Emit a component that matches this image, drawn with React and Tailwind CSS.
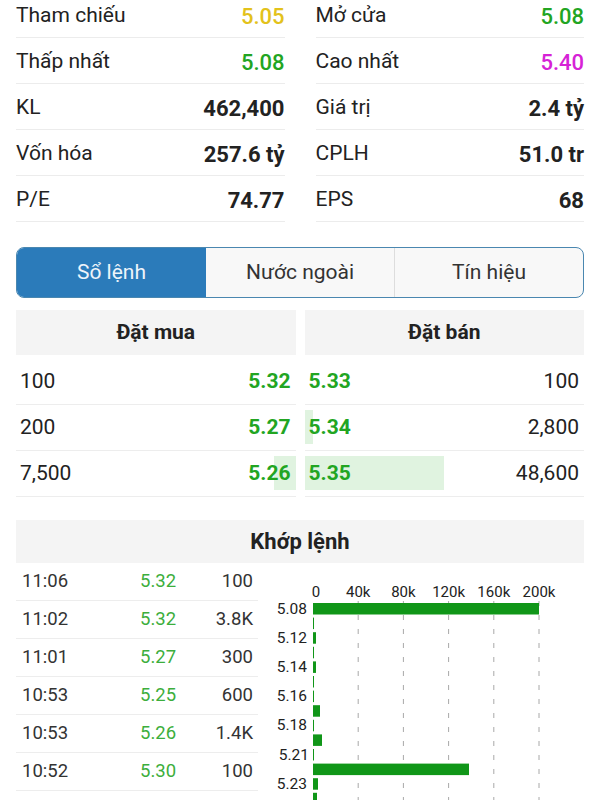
import React from "react";

const stats = [
  [
    { label: "Tham chiếu", value: "5.05", color: "text-[#e3c21b]", bold: false },
    { label: "Thấp nhất", value: "5.08", color: "text-[#22a522]", bold: false },
    { label: "KL", value: "462,400", color: "text-[#222]", bold: true },
    { label: "Vốn hóa", value: "257.6 tỷ", color: "text-[#222]", bold: true },
    { label: "P/E", value: "74.77", color: "text-[#222]", bold: true },
  ],
  [
    { label: "Mở cửa", value: "5.08", color: "text-[#22a522]", bold: false },
    { label: "Cao nhất", value: "5.40", color: "text-[#d622d6]", bold: false },
    { label: "Giá trị", value: "2.4 tỷ", color: "text-[#222]", bold: true },
    { label: "CPLH", value: "51.0 tr", color: "text-[#222]", bold: true },
    { label: "EPS", value: "68", color: "text-[#222]", bold: true },
  ],
];

const bids = [
  { qty: "100", price: "5.32", bar: 0 },
  { qty: "200", price: "5.27", bar: 0 },
  { qty: "7,500", price: "5.26", bar: 22 },
];

const asks = [
  { qty: "100", price: "5.33", bar: 0 },
  { qty: "2,800", price: "5.34", bar: 8 },
  { qty: "48,600", price: "5.35", bar: 139 },
];

const trades = [
  ["11:06", "5.32", "100"],
  ["11:02", "5.32", "3.8K"],
  ["11:01", "5.27", "300"],
  ["10:53", "5.25", "600"],
  ["10:53", "5.26", "1.4K"],
  ["10:52", "5.30", "100"],
];

// bar widths in px, 200k = 226px
const volBars = [226, 1, 3, 1, 3, 1, 1, 7, 1, 9, 1, 156, 5, 4];
const volLabels = ["5.08", "5.12", "5.14", "5.16", "5.18", "5.21", "5.23"];
const ticks = ["0", "40k", "80k", "120k", "160k", "200k"];

const VolumeChart = () => {
  const x0 = 43;
  const step = 45.2;
  return (
    <svg width="315" height="237" className="block">
      {ticks.slice(1).map((t, i) => (
        <line
          key={t}
          x1={x0 + step * (i + 1)}
          x2={x0 + step * (i + 1)}
          y1="38"
          y2="237"
          stroke="#a8a8a8"
          strokeWidth="1"
          strokeDasharray="5 9"
        />
      ))}
      {ticks.map((t, i) => (
        <text
          key={t}
          x={i === 0 ? x0 + 3 : x0 + step * i}
          y="34"
          textAnchor="middle"
          fontSize="15"
          fill="#222"
          fontFamily="Roboto, sans-serif"
        >
          {t}
        </text>
      ))}
      {volBars.map((w, i) => (
        <rect key={i} x={x0} y={40 + i * 14.6} width={w} height="11.5" fill="#109618" />
      ))}
      {volLabels.map((l, i) => (
        <text
          key={l}
          x={i === 5 ? 39 : 37}
          y={50.5 + i * 29.2}
          textAnchor="end"
          fontSize="15.5"
          fill="#222"
          fontFamily="Roboto, sans-serif"
        >
          {l}
        </text>
      ))}
    </svg>
  );
};

export default function App() {
  return (
    <div className="w-[600px] h-[800px] overflow-hidden bg-white font-['Roboto',sans-serif] text-[#222]">
      <div className="px-4 -mt-2 grid grid-cols-2 gap-x-[31px]">
        {stats.map((col, ci) => (
          <div key={ci}>
            {col.map((s) => (
              <div
                key={s.label}
                className="h-[46px] flex items-center justify-between pt-[3px] border-b border-[#ececec]"
              >
                <span className="text-[21px]">{s.label}</span>
                <span className={`text-[22px] ${s.bold ? "font-bold" : "font-medium"} ${s.color}`}>
                  {s.value}
                </span>
              </div>
            ))}
          </div>
        ))}
      </div>

      <div className="mx-4 mt-[25px] h-[51px] flex rounded-lg border-[1.5px] border-[#4a87b0] overflow-hidden bg-[#f8f8f8] text-[21px]">
        <div className="w-[189px] flex items-center justify-center bg-[#2b7bba] text-[#eef4fa]">
          Sổ lệnh
        </div>
        <div className="flex-1 flex items-center justify-center text-[#333] border-r border-[#dddddd]">
          Nước ngoài
        </div>
        <div className="flex-1 flex items-center justify-center text-[#333]">Tín hiệu</div>
      </div>

      <div className="mx-4 mt-3 grid grid-cols-2 gap-x-[9px]">
        <div>
          <div className="h-[45px] flex items-center justify-center bg-[#f4f4f4] text-[21px] font-bold">
            Đặt mua
          </div>
          <div className="mt-1">
            {bids.map((b) => (
              <div
                key={b.price}
                className="relative h-[46px] flex items-center justify-between pl-1 pr-[5px] border-b border-[#ededed] text-[21px]"
              >
                {b.bar > 0 && (
                  <div
                    className="absolute right-0 top-[5px] bottom-[6px] bg-[#e0f3e0]"
                    style={{ width: b.bar }}
                  />
                )}
                <span className="relative">{b.qty}</span>
                <span className="relative font-bold text-[#22a522]">{b.price}</span>
              </div>
            ))}
          </div>
        </div>
        <div>
          <div className="h-[45px] flex items-center justify-center bg-[#f4f4f4] text-[21px] font-bold">
            Đặt bán
          </div>
          <div className="mt-1">
            {asks.map((a) => (
              <div
                key={a.price}
                className="relative h-[46px] flex items-center justify-between pl-1 pr-[5px] border-b border-[#ededed] text-[21px]"
              >
                {a.bar > 0 && (
                  <div
                    className="absolute left-0 top-[5px] bottom-[6px] bg-[#e0f3e0]"
                    style={{ width: a.bar }}
                  />
                )}
                <span className="relative font-bold text-[#22a522]">{a.price}</span>
                <span className="relative">{a.qty}</span>
              </div>
            ))}
          </div>
        </div>
      </div>

      <div className="mx-4 mt-[23px] h-[43px] flex items-center justify-center bg-[#f4f4f4] text-[22px] font-bold">
        Khớp lệnh
      </div>

      <div className="ml-4 flex">
        <div className="w-[242px]">
          {trades.map((t, i) => (
            <div
              key={i}
              className="h-[38px] flex items-center border-b border-[#ededed] text-[18.5px] text-[#333]"
            >
              <span className="w-[124px] pl-[6px]">{t[0]}</span>
              <span className="text-[#3cae3c]">{t[1]}</span>
              <span className="flex-1 text-right pr-[5px]">{t[2]}</span>
            </div>
          ))}
        </div>
        <div className="ml-3">
          <VolumeChart />
        </div>
      </div>
    </div>
  );
}
